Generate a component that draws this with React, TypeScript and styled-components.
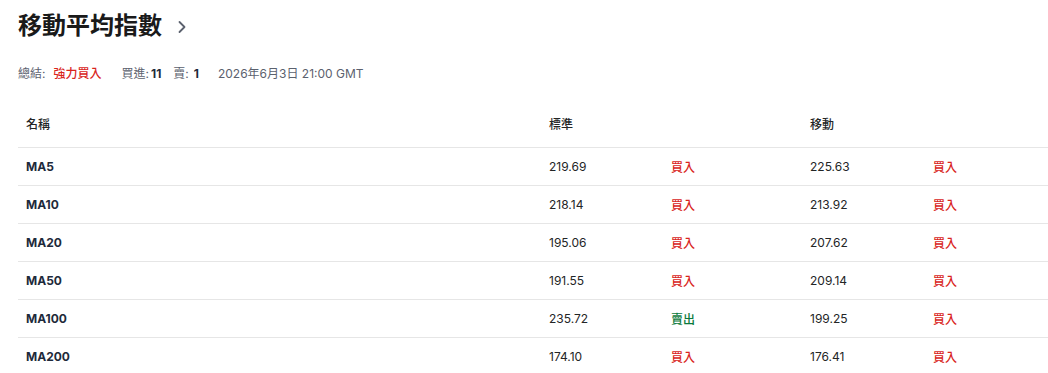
import React from "react";
import styled, { createGlobalStyle } from "styled-components";

const Global = createGlobalStyle`
  html, body { margin: 0; padding: 0; background: #fff; }
  body { font-family: Inter, "Noto Sans CJK TC", sans-serif; color: #232526; }
`;

const Page = styled.div`
  padding: 12px 0 0 18px;
`;

const TitleRow = styled.div`
  display: flex;
  align-items: center;
  gap: 12px;
  height: 28px;
`;

const Title = styled.h2`
  margin: 0;
  font-size: 24px;
  line-height: 28px;
  font-weight: 700;
  font-family: Inter, "Noto Sans CJK TC", sans-serif;
  color: #1a1a1a;
`;

const Chevron = styled.svg`
  width: 16px;
  height: 16px;
  margin-top: 2px;
`;

const Summary = styled.div`
  display: flex;
  align-items: center;
  margin-top: 25px;
  font-size: 12px;
  line-height: 18px;
  color: #5b616e;
`;

const Item = styled.span<{ $gap?: number }>`
  margin-right: ${(p) => p.$gap ?? 0}px;
`;

const Strong = styled.span<{ $red?: boolean; $ml: number }>`
  font-weight: ${(p) => (p.$red ? 500 : 700)};
  color: ${(p) => (p.$red ? "#d9251c" : "#1e2a3b")};
  margin-left: ${(p) => p.$ml}px;
`;

const Table = styled.table`
  margin-top: 17px;
  width: 1030px;
  table-layout: fixed;
  border-collapse: collapse;
  font-size: 12px;
`;

const Th = styled.th<{ $w: number }>`
  box-sizing: border-box;
  width: ${(p) => p.$w}px;
  text-align: left;
  font-weight: 500;
  padding: 0 8px;
  height: 47px;
  color: #232526;
`;

const Tr = styled.tr`
  border-top: 1px solid #e6e6e6;
`;

const Td = styled.td<{ $bold?: boolean }>`
  padding: 1px 8px 0;
  height: 36px;
  font-weight: ${(p) => (p.$bold ? 700 : 400)};
  color: ${(p) => (p.$bold ? "#1e2a3b" : "#232526")};
`;

const Signal = styled.span<{ $sell?: boolean }>`
  color: ${(p) => (p.$sell ? "#0a7a3c" : "#d9251c")};
  font-weight: 500;
`;

const rows: [string, string, string, string, string][] = [
  ["MA5", "219.69", "買入", "225.63", "買入"],
  ["MA10", "218.14", "買入", "213.92", "買入"],
  ["MA20", "195.06", "買入", "207.62", "買入"],
  ["MA50", "191.55", "買入", "209.14", "買入"],
  ["MA100", "235.72", "賣出", "199.25", "買入"],
  ["MA200", "174.10", "買入", "176.41", "買入"],
];

export default function App() {
  return (
    <Page>
      <Global />
      <TitleRow>
        <Title>移動平均指數</Title>
        <Chevron viewBox="0 0 16 16" fill="none">
          <path d="M5.5 3 L10.5 8 L5.5 13" stroke="#5b616e" strokeWidth="1.8" strokeLinecap="round" strokeLinejoin="round" />
        </Chevron>
      </TitleRow>
      <Summary>
        <Item $gap={20}>
          總結:<Strong $red $ml={8}>強力買入</Strong>
        </Item>
        <Item $gap={12}>
          買進:<Strong $ml={2}>11</Strong>
        </Item>
        <Item $gap={19}>
          賣:<Strong $ml={5}>1</Strong>
        </Item>
        <Item>2026年6月3日 21:00 GMT</Item>
      </Summary>
      <Table>
        <thead>
          <tr>
            <Th $w={523}>名稱</Th>
            <Th $w={122}>標準</Th>
            <Th $w={139}></Th>
            <Th $w={123}>移動</Th>
            <Th $w={123}></Th>
          </tr>
        </thead>
        <tbody>
          {rows.map((r) => (
            <Tr key={r[0]}>
              <Td $bold>{r[0]}</Td>
              <Td>{r[1]}</Td>
              <Td>
                <Signal $sell={r[2] === "賣出"}>{r[2]}</Signal>
              </Td>
              <Td>{r[3]}</Td>
              <Td>
                <Signal $sell={r[4] === "賣出"}>{r[4]}</Signal>
              </Td>
            </Tr>
          ))}
        </tbody>
      </Table>
    </Page>
  );
}
